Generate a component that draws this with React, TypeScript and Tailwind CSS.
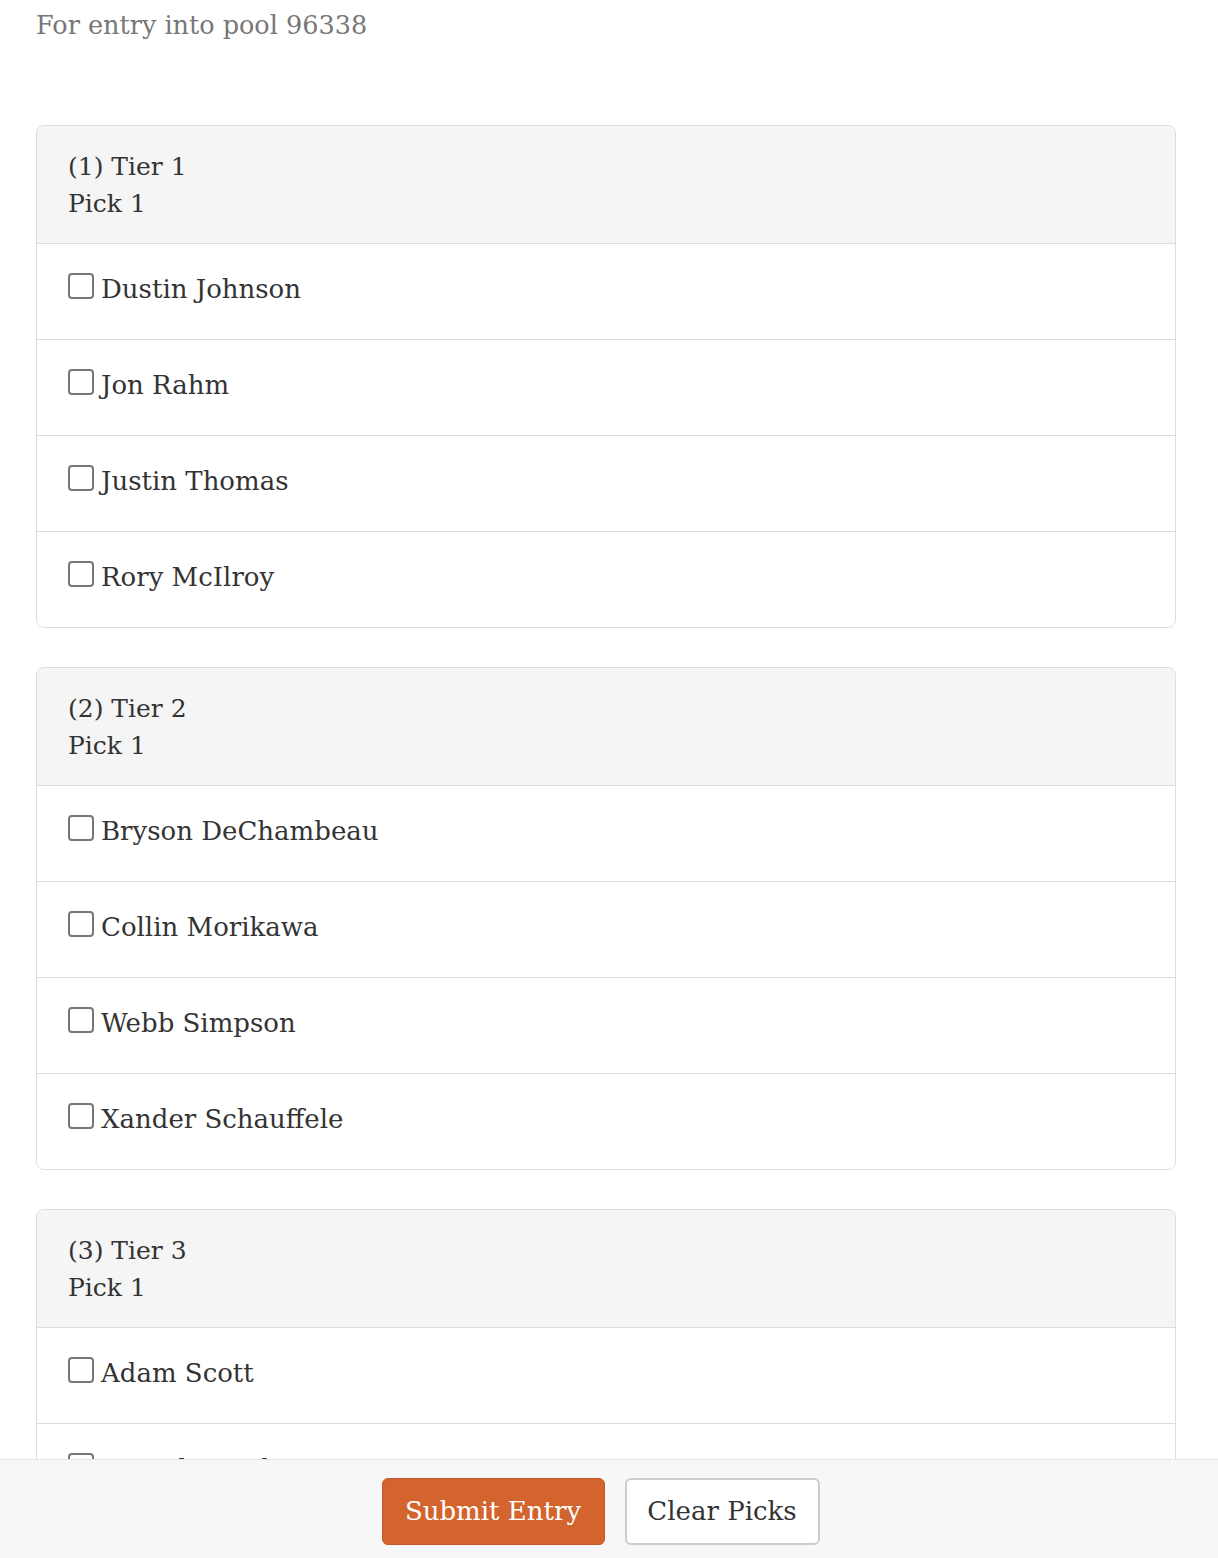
import React from "react";

const tiers = [
  { n: 1, players: ["Dustin Johnson", "Jon Rahm", "Justin Thomas", "Rory McIlroy"] },
  { n: 2, players: ["Bryson DeChambeau", "Collin Morikawa", "Webb Simpson", "Xander Schauffele"] },
  { n: 3, players: ["Adam Scott", "Patrick Reed", "Tony Finau", "Tyrrell Hatton"] },
];

function Box() {
  return (
    <span className="inline-block w-[26px] h-[26px] mb-[6px] border-2 border-[#767676] rounded-[4px] bg-white shrink-0" />
  );
}

export default function App() {
  return (
    <div
      className="min-h-screen bg-white text-[#333] pb-[140px]"
      style={{ fontFamily: '"DejaVu Serif", "Liberation Serif", serif' }}
    >
      <div className="pl-[36px] pr-[42px]">
        <div className="h-[52px] flex items-center text-[25.5px] text-[#777] leading-none">
          For entry into pool 96338
        </div>
        <div className="h-[73px]" />
        <div className="flex flex-col gap-[39px]">
          {tiers.map((t) => (
            <div key={t.n} className="border border-[#ddd] rounded-[8px] overflow-hidden">
              <div className="bg-[#f5f5f5] h-[117px] px-[31px] pt-[22px] text-[25px] leading-[37px]">
                <div>({t.n}) Tier {t.n}</div>
                <div>Pick 1</div>
              </div>
              {t.players.map((p) => (
                <div
                  key={p}
                  className="border-t border-[#ddd] h-[96px] flex items-center pl-[31px] pb-[5px] text-[26px] bg-white"
                >
                  <Box />
                  <span className="ml-[7px]">{p}</span>
                </div>
              ))}
            </div>
          ))}
        </div>
      </div>
      <div className="fixed bottom-0 left-0 right-0 h-[99px] bg-[#f7f7f7] border-t border-[#e5e5e5] flex items-start justify-center gap-[20px] pr-[17px] pt-[18px]">
        <button className="h-[67px] w-[223px] rounded-[6px] bg-[#d3642e] border border-[#c2592a] text-white text-[26px]">
          Submit Entry
        </button>
        <button className="h-[67px] w-[195px] rounded-[6px] bg-white border-2 border-[#ccc] text-[#333] text-[26px]">
          Clear Picks
        </button>
      </div>
    </div>
  );
}
